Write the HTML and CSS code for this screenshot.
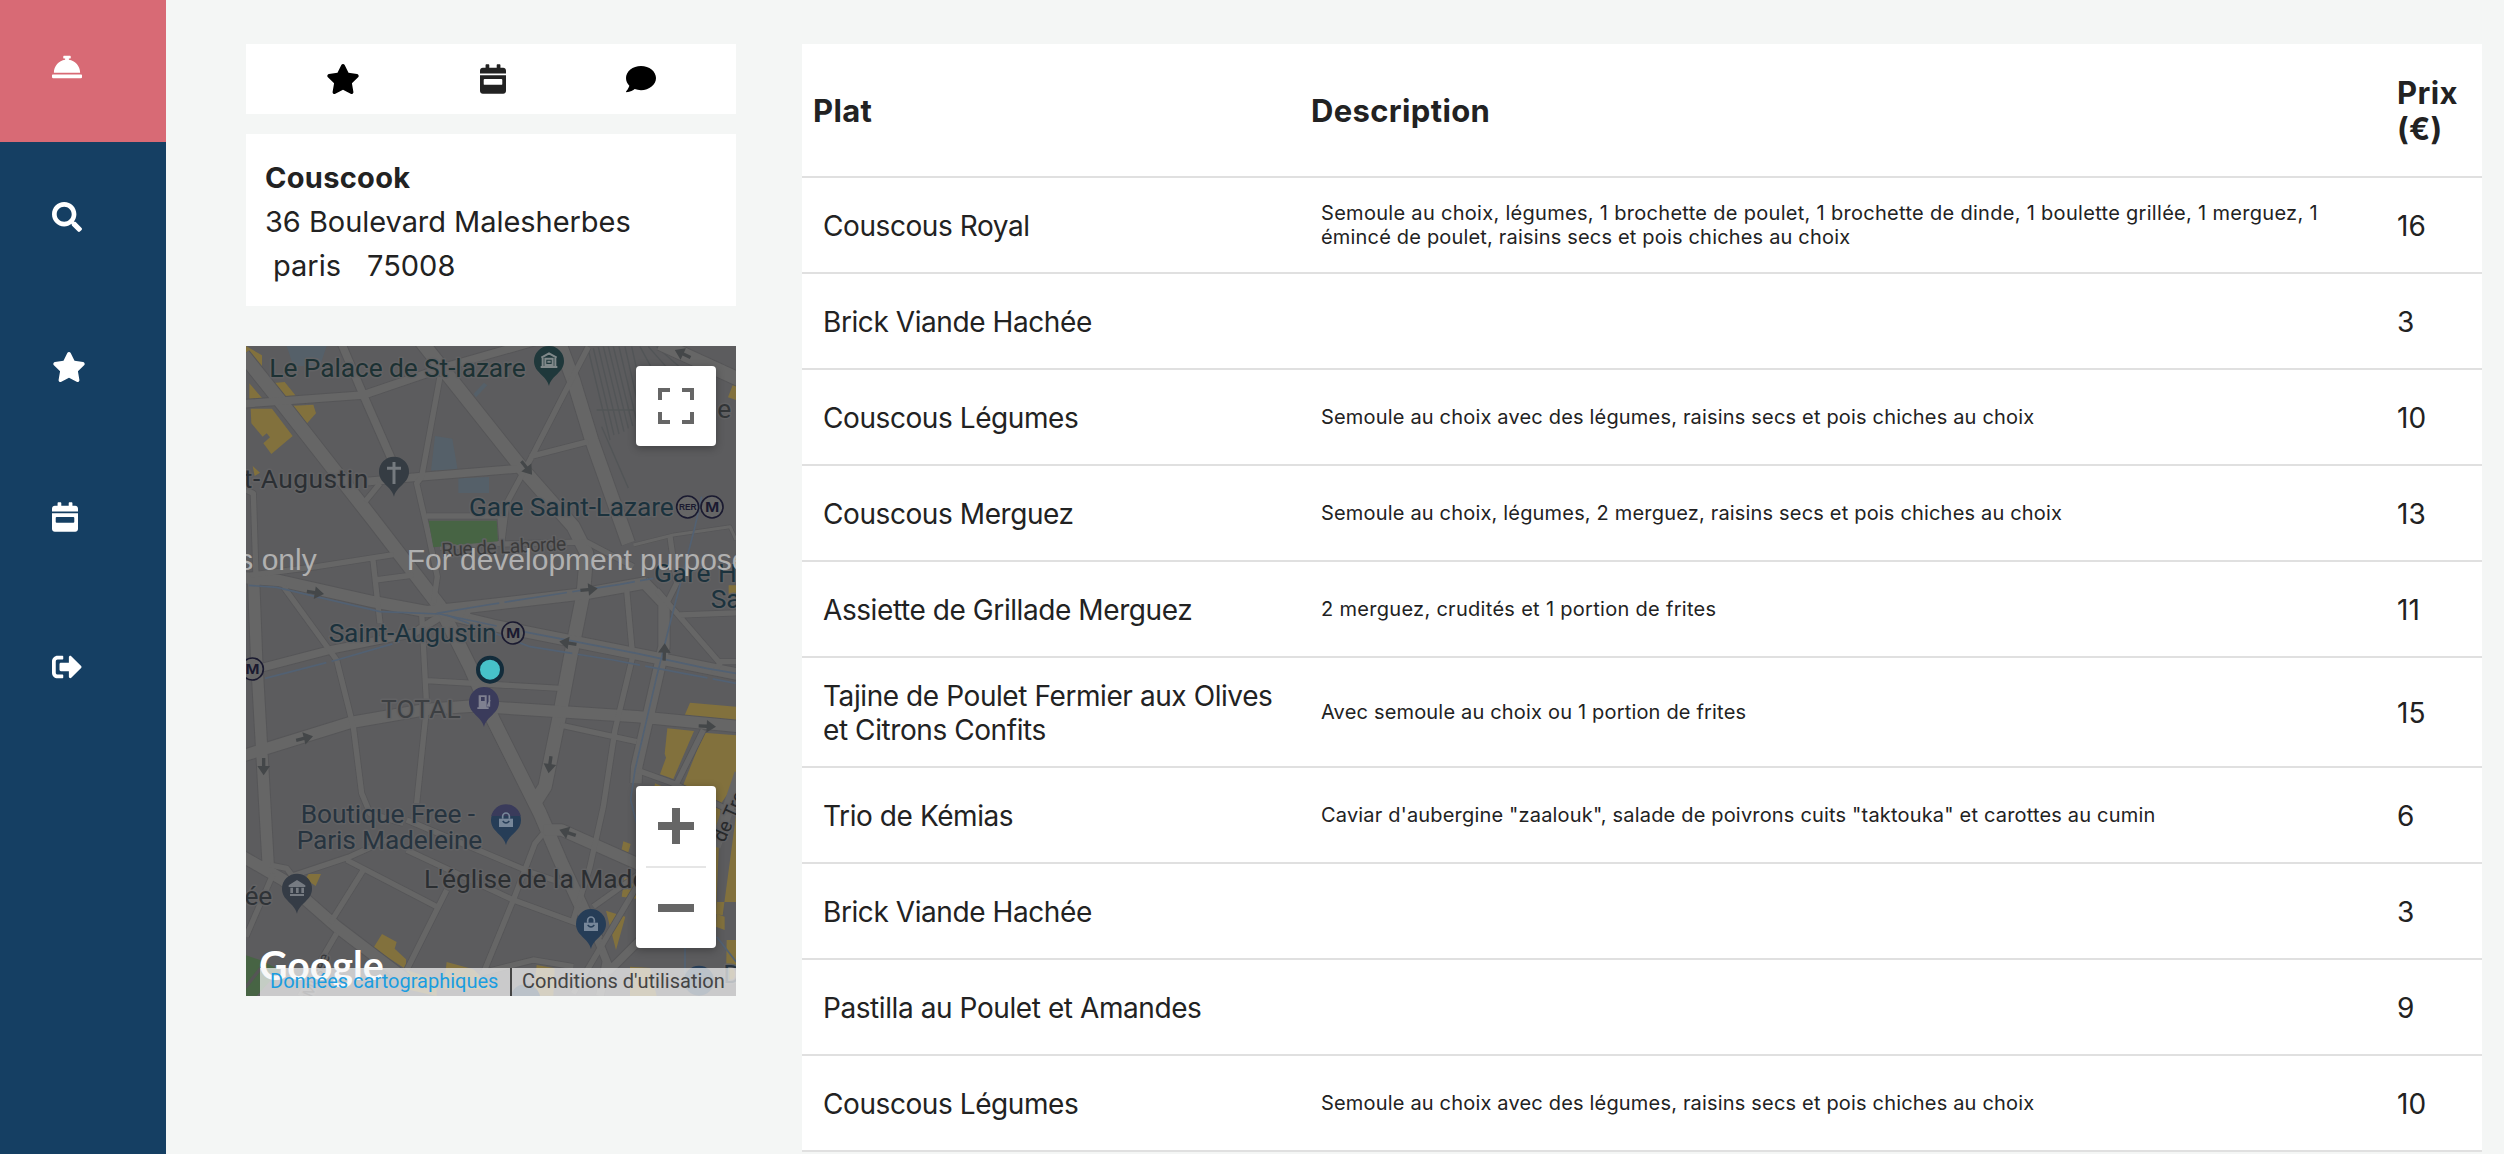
FILE: index.html
```html
<!DOCTYPE html>
<html lang="fr">
<head>
<meta charset="utf-8">
<title>Couscook</title>
<link rel="stylesheet" href="styles.css">
</head>
<body>
<svg width="0" height="0" class="defs">
  <symbol id="star" viewBox="0 0 576 512"><path d="M259.3 17.8L194 150.2 47.9 171.5c-26.2 3.8-36.7 36.1-17.7 54.6l105.7 103-25 145.5c-4.5 26.3 23.2 46 46.4 33.7L288 439.6l130.7 68.7c23.2 12.2 50.9-7.4 46.4-33.7l-25-145.5 105.7-103c19-18.5 8.5-50.8-17.7-54.6L382 150.2 316.7 17.8c-11.7-23.6-45.6-23.9-57.4 0z"/></symbol>
  <symbol id="calendar" viewBox="0 0 448 512"><path d="M400 64h-48V16c0-8.8-7.2-16-16-16h-32c-8.8 0-16 7.2-16 16v48H160V16c0-8.8-7.2-16-16-16h-32c-8.8 0-16 7.2-16 16v48H48C21.5 64 0 85.5 0 112v48h448v-48c0-26.5-21.5-48-48-48z"/><path fill-rule="evenodd" d="M0 464C0 490.5 21.5 512 48 512H400C426.5 512 448 490.5 448 464V192H0V464zM80 256H368Q384 256 384 272V340Q384 356 368 356H80Q64 356 64 340V272Q64 256 80 256z"/></symbol>
  <symbol id="comment" viewBox="0 0 512 512"><path d="M256 32C114.6 32 0 125.1 0 240c0 49.6 21.4 95 57 130.7C44.5 421.1 2.7 466 2.2 466.5c-2.2 2.3-2.8 5.7-1.5 8.7S4.8 480 8 480c66.3 0 116-31.8 140.6-51.4 32.7 12.3 69 19.4 107.4 19.4 141.4 0 256-93.1 256-208S397.4 32 256 32z"/></symbol>
  <symbol id="arrow" viewBox="-52 -20 54 40" overflow="visible"><path d="M-50-5h24v-14l28 19-28 19V5h-24z"/></symbol>
</svg>
<div class="app">
  <nav class="sidebar">
    <a class="nav-item active"><svg viewBox="0 0 512 512"><path d="M288 130.54V112h16c8.84 0 16-7.16 16-16V80c0-8.84-7.16-16-16-16h-96c-8.84 0-16 7.16-16 16v16c0 8.84 7.16 16 16 16h16v18.54C115.49 146.11 32 239.18 32 352h448c0-112.82-83.49-205.89-192-221.46zM496 384H16c-8.84 0-16 7.16-16 16v32c0 8.84 7.16 16 16 16h480c8.84 0 16-7.16 16-16v-32c0-8.84-7.16-16-16-16z"/></svg></a>
    <a class="nav-item"><svg viewBox="0 0 512 512"><path d="M505 442.7L405.3 343c-4.5-4.5-10.6-7-17-7H372c27.6-35.3 44-79.7 44-128C416 93.1 322.9 0 208 0S0 93.1 0 208s93.1 208 208 208c48.3 0 92.7-16.4 128-44v16.3c0 6.4 2.5 12.5 7 17l99.7 99.7c9.4 9.4 24.6 9.4 33.9 0l28.3-28.3c9.4-9.4 9.4-24.6.1-34zM208 336c-70.7 0-128-57.2-128-128 0-70.7 57.2-128 128-128 70.7 0 128 57.2 128 128 0 70.7-57.2 128-128 128z"/></svg></a>
    <a class="nav-item"><svg class="i-star"><use href="#star"/></svg></a>
    <a class="nav-item"><svg class="i-cal"><use href="#calendar"/></svg></a>
    <a class="nav-item"><svg viewBox="0 0 512 512"><path d="M497 273L329 441c-15 15-41 4.5-41-17v-96H152c-13.3 0-24-10.7-24-24v-96c0-13.3 10.7-24 24-24h136V88c0-21.4 25.9-32 41-17l168 168c9.3 9.4 9.3 24.6 0 34zM192 436v-40c0-6.6-5.4-12-12-12H96c-17.7 0-32-14.3-32-32V160c0-17.7 14.3-32 32-32h84c6.6 0 12-5.4 12-12V76c0-6.6-5.4-12-12-12H96c-53 0-96 43-96 96v192c0 53 43 96 96 96h84c6.6 0 12-5.4 12-12z"/></svg></a>
  </nav>
  <aside class="info">
    <div class="actions">
      <svg class="i-star"><use href="#star"/></svg>
      <svg class="i-cal"><use href="#calendar"/></svg>
      <svg class="i-sq"><use href="#comment"/></svg>
    </div>
    <div class="address">
      <div class="name">Couscook</div>
      <div class="street">36 Boulevard Malesherbes</div>
      <div class="city"><span>paris</span><span>75008</span></div>
    </div>
    <div class="map">
      <svg class="tiles" viewBox="18 18 1470 1950">
        <rect x="18" y="18" width="1470" height="1950" fill="#5c5c5e"/>
        <g fill="#556069">
          <path d="M140 18h120l-20 60-80 0zM585 288l52 8 16 94-80 2zM655 415l92-4v48h-92zM700 162l32-34 10 8-34 36z"/>
        </g>
        <g fill="none" stroke="#525557" stroke-width="4">
          <path d="M1045 30l65 270M1060 25l62 260M1075 22l62 260M1090 20l62 255M1105 20l60 245M1120 20l58 238M1137 20l55 232M1155 20l45 200M1175 20l40 180M1200 20l60 110M1225 20l80 90M1250 20l90 80M1070 210l110 0M1085 260l80 184"/>
        </g>
        <g fill="#82713d">
          <path d="M18 18l48 28v60l-48-60zM28 130l40 46-40 2zM92 130l42-4 34 42-40 4zM148 198l72-4 8 26-34 38zM32 206h64l62 82-64 54-24-32 20-18-10-12-12 10-34-40zM38 378l22 20-16 10zM1478 136l10 0v44l-24-8zM1466 736h22v44h-22z"/>
          <path d="M1350 1088l138 12v42l-154-16zM1282 1165l80 8-62 144-40-14 18-50-4-12zM1392 1178l96 8v140l-46 66-14 330 20 4 40-300v260l-60 0-60-330-38-22zM1150 1504l22 8-14 50-18-10zM1245 1330l70 30v28h-80zM1098 1712l58 18-28 100zM1155 1600l60 20v60l-70-10zM205 1602l38 0-16 36-30-20zM426 1782l44 24-6 20 34 32v30l-98-64zM500 1890l90 30v48l-90-20zM620 1866l80 22 60 60H610zM890 1875l54 10-4 82h-60zM1170 1880l60 4 20 84h-80zM1430 1722l24 8v40l-26-10zM1460 1800l28 0v120h-30z"/>
        </g>
        <g class="road edge">
          <path class="w44" d="M10 45L130 195 400 540 600 800 690 980 760 1140 900 1420 960 1560 1070 1800M540 0L850 390 1000 560 1040 640 1030 760 990 960 960 1120 915 1340 880 1395M955 0L1000 120 1055 300 1165 610M1260 10L1500 120"/>
          <path class="w38" d="M0 712L120 722 400 785 560 815 700 800 1040 760 1220 728M580 812L760 856 1180 940 1500 1004M1210 725L1272 790V920L1245 1040 1190 1280 1188 1330M0 1250L330 1148 560 1108 700 1098 1190 1130 1500 1160M0 1545L130 1620 290 1760 500 1920M910 1470L965 1470 1190 1570 1300 1640M40 700L50 960 86 1600"/>
          <path class="w24" d="M0 192L370 165 620 80 900 0M0 1000L270 930 520 880 600 830M300 0L370 165 460 370M380 425L545 410 850 385M1070 1790L1110 1890 1200 1800M1100 1860L1080 1968"/>
          <path class="w18" d="M600 110L545 410 530 430 560 560 592 710 580 790M1045 20L870 360 800 490 785 610M870 350L1045 305M560 528H780L786 610 600 622M786 612L1040 606 1180 680M30 706L230 680 460 644M130 740L290 960 340 1160 365 1360 390 1420 490 1450M398 650L420 850M405 720L520 705M545 820L560 1100 530 1390M1160 750L1178 950 1125 1170 1090 1400 1050 1580 1000 1740M1320 825L1500 818M1250 750L1440 970 1420 1000M1440 965H1500M560 1022L960 1045M960 1155L1190 1205M1190 1290L1300 1330 1488 1420M1390 1170L1310 1330M150 1610L330 1550 440 1500M320 1560L590 1700M500 1440L880 1600 1000 1640M500 1530L820 1680 1040 1760M910 1480L885 1510 820 1680 730 1900M370 1590L270 1750M620 1650L500 1890M1060 1700L1200 1600M290 1780L180 1968M720 1900L880 1860 1000 1880M90 1575l50 10 30 40M18 1790L100 1600M1290 590L1310 730 1280 790M375 485L420 430M690 800l-20 50M18 450l22 10 8 250M1000 1960L1190 1640"/>
          <path class="w10" d="M1180 615L1300 585 1470 560 1488 600"/>
        </g>
        <g class="road">
          <path class="w44" d="M10 45L130 195 400 540 600 800 690 980 760 1140 900 1420 960 1560 1070 1800M540 0L850 390 1000 560 1040 640 1030 760 990 960 960 1120 915 1340 880 1395M955 0L1000 120 1055 300 1165 610M1260 10L1500 120"/>
          <path class="w38" d="M0 712L120 722 400 785 560 815 700 800 1040 760 1220 728M580 812L760 856 1180 940 1500 1004M1210 725L1272 790V920L1245 1040 1190 1280 1188 1330M0 1250L330 1148 560 1108 700 1098 1190 1130 1500 1160M0 1545L130 1620 290 1760 500 1920M910 1470L965 1470 1190 1570 1300 1640M40 700L50 960 86 1600"/>
          <path class="w24" d="M0 192L370 165 620 80 900 0M0 1000L270 930 520 880 600 830M300 0L370 165 460 370M380 425L545 410 850 385M1070 1790L1110 1890 1200 1800M1100 1860L1080 1968"/>
          <path class="w18" d="M600 110L545 410 530 430 560 560 592 710 580 790M1045 20L870 360 800 490 785 610M870 350L1045 305M560 528H780L786 610 600 622M786 612L1040 606 1180 680M30 706L230 680 460 644M130 740L290 960 340 1160 365 1360 390 1420 490 1450M398 650L420 850M405 720L520 705M545 820L560 1100 530 1390M1160 750L1178 950 1125 1170 1090 1400 1050 1580 1000 1740M1320 825L1500 818M1250 750L1440 970 1420 1000M1440 965H1500M560 1022L960 1045M960 1155L1190 1205M1190 1290L1300 1330 1488 1420M1390 1170L1310 1330M150 1610L330 1550 440 1500M320 1560L590 1700M500 1440L880 1600 1000 1640M500 1530L820 1680 1040 1760M910 1480L885 1510 820 1680 730 1900M370 1590L270 1750M620 1650L500 1890M1060 1700L1200 1600M290 1780L180 1968M720 1900L880 1860 1000 1880M90 1575l50 10 30 40M18 1790L100 1600M1290 590L1310 730 1280 790M375 485L420 430M690 800l-20 50M18 450l22 10 8 250M1000 1960L1190 1640"/>
          <path class="w10" d="M1180 615L1300 585 1470 560 1488 600"/>
          <path class="w38" d="M1500 1300L1425 1520"/>
        </g>
        <path fill="#476444" d="M566 542h204l4 62-194 18zM18 1846l42 14 60 30-70 78H18z"/>
        <path fill="none" stroke="#555" stroke-width="10" d="M14 1945L62 1885"/>
        <g fill="none" stroke="#526173" stroke-width="5">
          <path d="M26 736L110 742 420 815 600 822 770 858M850 875L1190 940 1400 985 1488 1000"/>
          <path stroke-dasharray="190 16" d="M590 820L740 795 1140 733 1240 715M620 825L870 920 1120 960 1488 1030M75 1015L290 960 480 905"/>
          <path d="M1385 470L1365 560 1285 870 1250 1010 1185 1290 1172 1380 1190 1450M1430 1790L1500 1880M1335 1800V1900"/>
        </g>
        <g fill="#444749">
          <path transform="translate(1308 32) rotate(205)" d="M-48-5h24v-14l28 19-28 19V5h-24z"/>
          <path transform="translate(875 403) rotate(52)" d="M-50-5h24v-14l28 19-28 19V5h-24z"/>
          <path transform="translate(250 762) rotate(9)" d="M-50-5h24v-14l28 19-28 19V5h-24z"/>
          <path transform="translate(1071 746) rotate(-6)" d="M-50-5h24v-14l28 19-28 19V5h-24z"/>
          <path transform="translate(960 905) rotate(189)" d="M-50-5h24v-14l28 19-28 19V5h-24z"/>
          <path transform="translate(1274 912) rotate(-88)" d="M-50-5h24v-14l28 19-28 19V5h-24z"/>
          <path transform="translate(217 1189) rotate(-14)" d="M-50-5h24v-14l28 19-28 19V5h-24z"/>
          <path transform="translate(71 1304) rotate(90)" d="M-50-5h24v-14l28 19-28 19V5h-24z"/>
          <path transform="translate(926 1298) rotate(98)" d="M-50-5h24v-14l28 19-28 19V5h-24z"/>
          <path transform="translate(960 1470) rotate(199)" d="M-50-5h24v-14l28 19-28 19V5h-24z"/>
          <path transform="translate(1426 1160) rotate(3)" d="M-50-5h24v-14l28 19-28 19V5h-24z"/>
        </g>
        <g class="pins">
          <path fill="#1f383b" d="M882 63a45 45 0 1 1 90 0c0 36-38 42-45 75-7-33-45-39-45-75z"/>
          <path fill="none" stroke="#80898a" stroke-width="6" d="M902 81h50M908 78V54M946 78V54M904 53l23-13 23 13M916 56h22v19h-22zM922 65h10"/>
          <path fill="#353c43" d="M417 395a45 45 0 1 1 90 0c0 36-38 42-45 75-7-33-45-39-45-75z"/>
          <path stroke="#757a7f" stroke-width="9" d="M462 366v66M441 385h42"/>
          <path fill="#3a3b5b" d="M687 1086a45 45 0 1 1 90 0c0 36-38 42-45 75-7-33-45-39-45-75z"/>
          <path fill="#7f8090" fill-rule="evenodd" d="M716 1066h24v36h6v5h-34v-5h4zM723 1071v12h11v-12z"/>
          <path fill="none" stroke="#7f8090" stroke-width="5" d="M748 1066v34M750 1080l-8 20"/>
          <path fill="#263d57" d="M753 1440a45 45 0 1 1 90 0c0 36-38 42-45 75-7-33-45-39-45-75z"/>
          <path fill="#3a3b5b" d="M754 1428a45 45 0 0 1 88 0z"/>
          <path fill="#77879a" d="M777 1436h42v25h-42z"/><path fill="none" stroke="#77879a" stroke-width="5" d="M788 1436v-7a10 10 0 0 1 20 0v7"/><path fill="none" stroke="#263d57" stroke-width="4" d="M788 1443q10 12 20 0"/>
          <path fill="#353c46" d="M126 1646a45 45 0 1 1 90 0c0 36-38 42-45 75-7-33-45-39-45-75z"/>
          <path fill="#767b82" d="M146 1636l25-16 25 16v5h-50zM151 1643h8v16h-8zM168 1643h8v16h-8zM184 1643h8v16h-8zM150 1662h42v6h-42z"/>
          <path fill="#263d57" d="M1008 1752a45 45 0 1 1 90 0c0 36-38 42-45 75-7-33-45-39-45-75z"/>
          <path fill="#77879a" d="M1032 1748h42v25h-42z"/><path fill="none" stroke="#77879a" stroke-width="5" d="M1043 1748v-7a10 10 0 0 1 20 0v7"/><path fill="none" stroke="#263d57" stroke-width="4" d="M1043 1755q10 12 20 0"/>
          <circle cx="1377" cy="1922" r="45" fill="#263d57"/>
          <path fill="#263d57" d="M812 1968a45 45 0 0 1 88 0z"/>
        </g>
        <g class="metro">
          <circle cx="1343" cy="501" r="33"/><circle cx="1416" cy="501" r="33"/><circle cx="819" cy="879" r="33"/><circle cx="37" cy="987" r="33"/>
          <text x="1317" y="511" font-size="27" textLength="53" lengthAdjust="spacingAndGlyphs">RER</text><text x="1395" y="517" font-size="46" textLength="43" lengthAdjust="spacingAndGlyphs">M</text><text x="798" y="895" font-size="46" textLength="43" lengthAdjust="spacingAndGlyphs">M</text><text x="16" y="1003" font-size="46" textLength="43" lengthAdjust="spacingAndGlyphs">M</text>
        </g>
        <g class="labels">
          <text x="88" y="111" fill="#1c3133" textLength="769">Le Palace de St-lazare</text>
          <text x="386" y="444" fill="#2b2f33" text-anchor="end" letter-spacing="1.5">nt-Augustin</text>
          <text x="687" y="528" fill="#1b323d" textLength="614">Gare Saint-Lazare</text>
          <text x="605" y="650" fill="#3b3b3b" font-size="58" textLength="375" transform="rotate(-3 605 650)">Rue de Laborde</text>
          <text x="1242" y="726" fill="#1b323d" letter-spacing="1.5">Gare Ha</text>
          <text x="1412" y="804" fill="#1b323d">Sa</text>
          <text x="1432" y="234" fill="#333638">e</text>
          <text x="266" y="906" fill="#1b323d" textLength="504">Saint-Augustin</text>
          <text x="423" y="1134" fill="#3c3f42" textLength="239">TOTAL</text>
          <text x="182" y="1450" fill="#27343f" textLength="523">Boutique Free -</text>
          <text x="170" y="1528" fill="#27343f" textLength="557">Paris Madeleine</text>
          <text x="552" y="1644" fill="#2b2e31">L'église de la Madeleine</text>
          <text x="97" y="1694" fill="#2f3337" text-anchor="end">ée</text>
          <text x="215" y="1975" fill="#36383a" font-size="46" transform="rotate(-66 215 1975)">Musée</text>
          <text x="1453" y="1510" fill="#27292b" font-size="58" transform="rotate(-66 1453 1510)">de Tronchet</text>
          <text x="1450" y="1930" fill="#27343f">D</text>
        </g>
        <g class="watermark"><text x="230" y="691" text-anchor="end">s only</text><text x="500" y="691">For development purposes only</text></g>
        <circle cx="750" cy="989" r="36" fill="#47c2c9" stroke="#132c3b" stroke-width="12"/>
        <text class="logo" x="57" y="1920" textLength="374">Google</text>
      </svg>
      <div class="attribution"><a>Données cartographiques</a><span>Conditions d'utilisation</span></div>
      <button class="ctl full"><svg viewBox="0 0 36 36"><path d="M0 0h12v4H4v8H0zM24 0h12v12h-4V4h-8zM0 24h4v8h8v4H0zM32 24h4v12H24v-4h8z"/></svg></button>
      <div class="ctl zoom"><svg viewBox="0 0 36 36"><path d="M14 0h8v14h14v8H22v14h-8V22H0v-8h14z"/></svg><hr><svg viewBox="0 0 36 36"><path d="M0 14h36v8H0z"/></svg></div>
    </div>
  </aside>
  <main>
    <table>
      <colgroup><col class="c1"><col class="c2"><col class="c3"></colgroup>
      <thead><tr><th>Plat</th><th>Description</th><th>Prix<br>(€)</th></tr></thead>
      <tbody>
        <tr><td>Couscous Royal</td><td><span class="loose">Semoule au choix, légumes, 1 brochette de poulet, 1 brochette de dinde, 1 boulette grillée, 1 merguez, 1</span><br>émincé de poulet, raisins secs et pois chiches au choix</td><td>16</td></tr>
        <tr><td>Brick Viande Hachée</td><td></td><td>3</td></tr>
        <tr><td>Couscous Légumes</td><td>Semoule au choix avec des légumes, raisins secs et pois chiches au choix</td><td>10</td></tr>
        <tr><td>Couscous Merguez</td><td>Semoule au choix, légumes, 2 merguez, raisins secs et pois chiches au choix</td><td>13</td></tr>
        <tr><td>Assiette de Grillade Merguez</td><td><span class="loose">2 merguez, crudités et 1 portion de frites</span></td><td>11</td></tr>
        <tr class="tall"><td>Tajine de Poulet Fermier aux Olives<br>et Citrons Confits</td><td>Avec semoule au choix ou 1 portion de frites</td><td>15</td></tr>
        <tr><td>Trio de Kémias</td><td>Caviar d'aubergine "zaalouk", salade de poivrons cuits "taktouka" et carottes au cumin</td><td>6</td></tr>
        <tr><td>Brick Viande Hachée</td><td></td><td>3</td></tr>
        <tr><td>Pastilla au Poulet et Amandes</td><td></td><td>9</td></tr>
        <tr><td>Couscous Légumes</td><td>Semoule au choix avec des légumes, raisins secs et pois chiches au choix</td><td>10</td></tr>
      </tbody>
    </table>
  </main>
</div>
</body>
</html>
```
FILE: styles.css
```css
* { box-sizing: border-box; }
body {
  margin: 0;
  height: 1154px;
  overflow: hidden;
  background: #f4f6f5;
  color: #222;
  font-family: Inter, "Liberation Sans", sans-serif;
}
.defs { position: absolute; }
svg { display: block; }
.app { display: flex; height: 1154px; }
.sidebar { width: 166px; background: #153f63; flex: none; }
.nav-item { display: block; height: 150px; padding: 52px 0 0 52px; }
.nav-item.active { height: 142px; margin-bottom: 8px; background: #d86a75; }
.nav-item svg { width: 30px; height: 30px; fill: #fff; }
.nav-item .i-star { width: 34px; }
.nav-item .i-cal { width: 26px; }
.info { width: 490px; margin: 44px 66px 0 80px; flex: none; }
.actions {
  display: flex;
  justify-content: space-between;
  height: 70px;
  padding: 20px 80px;
  background: #fff;
}
.actions svg { height: 30px; }
.actions .i-star { width: 34px; }
.actions .i-cal { width: 26px; fill: #222; }
.actions .i-sq { width: 30px; }
.address {
  height: 172px;
  margin: 20px 0 40px;
  padding: 22px 19px 0;
  background: #fff;
  font-size: 29px;
  line-height: 44px;
}
.name { font-weight: 700; letter-spacing: .3px; }
.street { letter-spacing: -.05px; }
.city { display: flex; gap: 26px; padding-left: 8px; }
.map { position: relative; height: 650px; overflow: hidden; }
.tiles { width: 490px; height: 650px; }
.road path { fill: none; stroke: #666; stroke-linejoin: round; }
.road.edge path { stroke: #565658; }
.road .w44 { stroke-width: 40; }
.road .w38 { stroke-width: 34; }
.road .w24 { stroke-width: 23; }
.road .w18 { stroke-width: 16; }
.road .w10 { stroke-width: 9; }
.road.edge .w44 { stroke-width: 46; }
.road.edge .w38 { stroke-width: 40; }
.road.edge .w24 { stroke-width: 29; }
.road.edge .w18 { stroke-width: 21; }
.road.edge .w10 { stroke-width: 13; }
.labels { font-family: Roboto, sans-serif; font-size: 79px; paint-order: stroke; stroke: #626264; stroke-width: 9px; stroke-linejoin: round; }
.metro circle { fill: #666; stroke: #1a1a30; stroke-width: 5; }
.metro text { font-family: "Liberation Sans", sans-serif; font-weight: 700; fill: #1a1a30; }
.watermark { font-family: "Liberation Sans", sans-serif; font-size: 90px; fill: #b0b0b0; }
.logo { font-family: Lato, sans-serif; font-weight: 700; font-size: 118px; fill: #fff; }
.attribution {
  position: absolute;
  left: 14px;
  right: 0;
  bottom: 0;
  display: flex;
  height: 28px;
  background: rgba(245, 245, 245, .72);
  font: 20px/27px Roboto, sans-serif;
  color: #444;
}
.attribution a { width: 250px; padding-left: 10px; color: #1a9de0; }
.attribution span { flex: 1; padding-left: 10px; border-left: 2px solid #444; white-space: nowrap; }
.ctl {
  position: absolute;
  right: 20px;
  width: 80px;
  padding: 22px;
  border: 0;
  border-radius: 4px;
  background: #fff;
  box-shadow: 0 2px 8px rgba(0, 0, 0, .3);
}
.ctl svg { width: 36px; height: 36px; fill: #666; }
.full { top: 20px; height: 80px; }
.zoom { top: 440px; height: 162px; }
.ctl hr { width: 60px; height: 2px; margin: 22px -12px; border: 0; background: #e6e6e6; }
table {
  width: 1680px;
  table-layout: fixed;
  border-collapse: separate;
  border-spacing: 0;
  margin-top: 44px;
  background: #fff;
}
.c1 { width: 498px; }
.c2 { width: 1086px; }
.c3 { width: 96px; }
th, td { padding: 2px 0 0 21px; border-bottom: 2px solid #e0e0e0; text-align: left; vertical-align: middle; white-space: nowrap; }
th { height: 134px; padding-left: 11px; font-size: 31px; line-height: 36px; font-weight: 700; letter-spacing: .35px; }
td { height: 96px; font-size: 28px; line-height: 34px; letter-spacing: -.42px; }
td:nth-child(2) { padding-top: 0; font-size: 20px; line-height: 24px; letter-spacing: .18px; }
td:nth-child(3) { padding-left: 11px; letter-spacing: 0; }
.loose { letter-spacing: .3px; }
.tall td { height: 110px; }
```
